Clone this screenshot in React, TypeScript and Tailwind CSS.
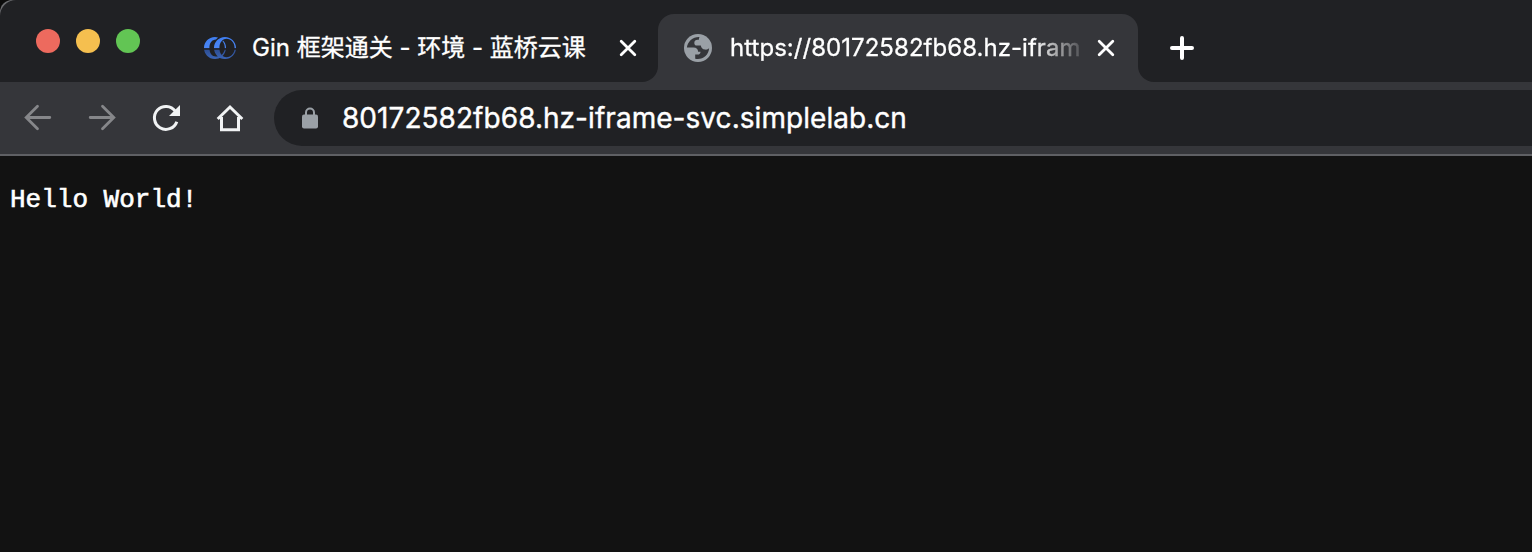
import type { ReactNode } from 'react';

function CloseIcon() {
  return (
    <svg width="20" height="20" viewBox="0 0 20 20" className="shrink-0" stroke="#fff" strokeWidth="2.8" strokeLinecap="round">
      <path d="M3.2 3.2 16.8 16.8M16.8 3.2 3.2 16.8" />
    </svg>
  );
}

function CourseLogo() {
  return (
    <svg width="32" height="24" viewBox="0 0 32 24" className="shrink-0">
      <defs>
        <linearGradient id="logo" gradientUnits="userSpaceOnUse" x1="0" y1="1" x2="0" y2="23">
          <stop offset="0" stopColor="#3f7df0" />
          <stop offset="0.5" stopColor="#4a86f5" />
          <stop offset="0.52" stopColor="#2c4a8c" />
          <stop offset="1" stopColor="#3a65b8" />
        </linearGradient>
      </defs>
      <g fill="url(#logo)" fillRule="evenodd">
        <path d="M11 1C4.500 1 0 6 0 12s4.500 11 11 11c2.500 0 4.800-.8 6.500-2.200l-2-1.600c-1 .9-2.200 1.300-3.500 1.300C8 20.500 5.400 17 5.400 12S8 3.500 12 3.500l2-1.900C13 1.200 12 1 11 1Z" />
        <path d="M21 1c-6.500 0-11 5-11 11s4.500 11 11 11c6.200 0 11-5 11-11S27.200 1 21 1Zm1.500 1.800c4.600 0 8.100 4 8.100 9.200s-3.500 9.200-8.100 9.200c-4.200 0-7.100-4-7.100-9.200s2.900-9.200 7.100-9.200Z" />
        <path d="M19 4.500c2 1.900 3 4.400 3 7.500s-1.600 6.600-4 8.500l-1-1c2-1.900 3.800-4.500 3.800-7.500s-.7-4.800-2.300-6.800Z" />
      </g>
      <path d="M0 13h32" stroke="#202124" strokeWidth="1.700" />
    </svg>
  );
}

function GlobeIcon() {
  return (
    <svg width="28" height="28" viewBox="0 0 28 28" className="shrink-0">
      <circle cx="14" cy="14" r="14" fill="#9aa0a6" />
      <path
        fill="#35363a"
        d="M15.500 3C9 2.700 3.500 7.500 2.900 13.500h6.600c3 0 4.600 1.600 4.600 4.300h2.400c0 1.900-1 2.800-2.800 2.800h-2.500v4.200c7 1.600 13.500-3.400 13.900-10.500-1 1-2.400 1.500-4 1.300-2.600-.2-4-1.700-4.300-4.100h-3.600c-2 0-2.900-1-2.900-2.600 0-2 1.400-3.100 3.300-3.100h1.300c0-1.100.1-2 .6-2.800Z"
      />
    </svg>
  );
}

function ToolbarIcon({ children }: { children: ReactNode }) {
  return (
    <svg width="32" height="32" viewBox="0 0 32 32" className="shrink-0" fill="none" strokeWidth="2.8">
      {children}
    </svg>
  );
}

export default function App() {
  return (
    <div className="flex h-[552px] w-[1532px] flex-col overflow-hidden bg-[#121212] font-['Inter','Noto_Sans_CJK_SC',sans-serif] text-white">
      <div className="bg-[#0b0b0b]">
        <div className="flex h-[82px] overflow-hidden rounded-tl-[12px] bg-[linear-gradient(#6a6b6e_0_20px,#35363a_20px)]">
          <div className="flex w-[658px] shrink-0 items-center rounded-br-[16px] rounded-tl-[16px] bg-[#202124]">
            <div className="ml-9 flex gap-4">
              <span className="size-6 rounded-full bg-[#ed6a5e]" />
              <span className="size-6 rounded-full bg-[#f5bf4f]" />
              <span className="size-6 rounded-full bg-[#62c554]" />
            </div>
            <div className="ml-16 flex items-center pt-[14px]">
              <CourseLogo />
              <span className="ml-4 w-[366px] whitespace-nowrap text-[24px] leading-8 [-webkit-text-stroke:0.3px_white]">Gin 框架通关 - 环境 - 蓝桥云课</span>
              <CloseIcon />
            </div>
          </div>
          <div className="w-[480px] shrink-0 bg-[#202124] pt-[14px]">
            <div className="flex h-[68px] items-center rounded-t-[16px] bg-[#35363a] pl-[26px]">
              <GlobeIcon />
              <span className="ml-[18px] mr-[14px] w-[352px] whitespace-nowrap text-[24px] leading-8 tracking-[0.04px] [-webkit-text-stroke:0.3px_white] [mask-image:linear-gradient(to_right,#000_86%,transparent_102%)]">
                https://80172582fb68.hz-ifram
              </span>
              <CloseIcon />
            </div>
          </div>
          <div className="flex flex-1 items-center rounded-bl-[16px] bg-[#202124] pl-8 pt-[14px]">
            <svg width="24" height="24" viewBox="0 0 24 24" stroke="#fff" strokeWidth="4" strokeLinecap="round">
              <path d="M2 12h20M12 2v20" />
            </svg>
          </div>
        </div>
      </div>
      <div className="flex h-[74px] shrink-0 items-center border-b-2 border-[#5f6064] bg-[#35363a] pl-[22px]">
        <div className="flex gap-8">
          <ToolbarIcon>
            <path d="M27.800 15.500H4.500M15.500 4.200 4.200 15.500l11.300 11.300" stroke="#86878a" strokeLinecap="round" />
          </ToolbarIcon>
          <ToolbarIcon>
            <path d="M4.200 15.500h23.300M16.500 4.200l11.300 11.300-11.300 11.300" stroke="#86878a" strokeLinecap="round" />
          </ToolbarIcon>
          <ToolbarIcon>
            <path d="M26.800 19.700A11.500 11.500 0 1 1 25.300 9.200" stroke="#f1f3f4" strokeWidth="3" />
            <path d="M30 3v11H19Z" fill="#f1f3f4" />
          </ToolbarIcon>
          <ToolbarIcon>
            <path d="M3.700 17 16 5l12.300 12M7.500 15v12.700h17V15" stroke="#f1f3f4" strokeWidth="3" />
          </ToolbarIcon>
        </div>
        <div className="ml-7 flex h-14 flex-1 items-center rounded-l-full bg-[#202124] pl-7">
          <svg width="16" height="22" viewBox="0 0 16 22" className="shrink-0">
            <rect y="7.500" width="16" height="14" rx="2" fill="#9aa0a6" />
            <path d="M4 8V5.500a4 4 0 0 1 8 0V8" fill="none" stroke="#9aa0a6" strokeWidth="2" />
          </svg>
          <span className="ml-6 whitespace-nowrap text-[28px] leading-9 tracking-[0.05px] [-webkit-text-stroke:0.4px_white]">80172582fb68.hz-iframe-svc.simplelab.cn</span>
        </div>
      </div>
      <pre className="pl-[10px] pt-[29px] font-['Liberation_Mono',monospace] text-[26px] leading-[30px] [-webkit-text-stroke:0.6px_white]">Hello World!</pre>
    </div>
  );
}
